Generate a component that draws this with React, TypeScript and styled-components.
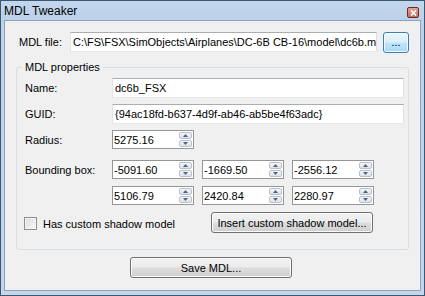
import React, { FC } from 'react';
import styled, { createGlobalStyle, css } from 'styled-components';

const GlobalStyle = createGlobalStyle`
    html, body {
        margin: 0;
        padding: 0;
        background: #ffffff;
    }
    body {
        font-family: "Liberation Sans", Arial, sans-serif;
        font-size: 11px;
        color: #000000;
    }
`;

const Window = styled.div`
    width: 425px;
    height: 296px;
    box-sizing: border-box;
    display: flex;
    flex-direction: column;
    background: linear-gradient(#bdd2ea, #c3d6ec);
    border: 1px solid #3a5874;
    overflow: hidden;
`;

const TitleBar = styled.div`
    height: 19px;
    flex-shrink: 0;
    display: flex;
    align-items: center;
    padding: 0 5px 0 3px;
    background: linear-gradient(#c2d6ec, #bcd1e9);
`;

const Title = styled.span`
    font-family: "Liberation Sans", Arial, sans-serif;
    font-size: 12px;
    color: #000000;
    margin-right: auto;
    padding-top: 1px;
`;

const CloseButton = styled.div`
    width: 12px;
    height: 11px;
    box-sizing: border-box;
    margin-top: 4px;
    border: 1px solid #6c2a24;
    border-radius: 2px;
    background: linear-gradient(#e2a397, #c86b5e);
    display: flex;
    align-items: center;
    justify-content: center;
`;

const Client = styled.div`
    flex: 1;
    margin: 0 3px 4px 3px;
    background: #f0f0f0;
    border: 1px solid #8ca3bb;
    display: flex;
    flex-direction: column;
    padding: 11px 0 0 0;
`;

const FileRow = styled.div`
    display: flex;
    align-items: center;
    padding-left: 14px;
    height: 20px;
`;

const Label = styled.span<{ width?: number }>`
    ${props => props.width && css`width: ${props.width}px;`}
    flex-shrink: 0;
    white-space: nowrap;
`;

const TextBox = styled.div<{ width?: number }>`
    height: 20px;
    box-sizing: border-box;
    ${props => props.width ? css`width: ${props.width}px;` : css`flex: 1;`}
    background: #ffffff;
    border: 1px solid;
    border-color: #abadb3 #dbdfe6 #e3e9ef #e2e3ea;
    padding: 0 2px 0 2px;
    display: flex;
    align-items: center;
    white-space: nowrap;
    overflow: hidden;
`;

const Button = styled.button<{ width: number; focused?: boolean }>`
    width: ${props => props.width}px;
    height: 21px;
    box-sizing: border-box;
    padding: 0;
    font-family: "Liberation Sans", Arial, sans-serif;
    font-size: 11px;
    color: #000000;
    border: 1px solid #707070;
    border-radius: 3px;
    background: linear-gradient(#f2f2f2 0%, #ebebeb 48%, #dddddd 52%, #cfcfcf 100%);
    box-shadow: inset 0 0 0 1px #fbfbfb;
    ${props => props.focused && css`
        border-color: #3c7fb1;
        background: linear-gradient(#eaf6fd 0%, #d9f0fc 48%, #bee6fd 52%, #a7d9f5 100%);
        box-shadow: inset 0 0 0 1px #f5fbfe;
    `}
`;

const GroupBox = styled.fieldset`
    margin: 9px 0 0 11px;
    width: 393px;
    box-sizing: border-box;
    border: 1px solid #d5dfe5;
    border-radius: 3px;
    padding: 4px 4px 16px 8px;
    display: grid;
    grid-template-columns: 87px 1fr;
    grid-template-rows: 20px 6px 20px 6px 19px 11px 19px 7px 19px 7px 21px;
    align-items: center;
`;

const Legend = styled.legend`
    padding: 0 3px;
    margin-left: -3px;
    line-height: 13px;
    font-size: 11px;
`;

const Gap = styled.div`
    grid-column: 1 / -1;
`;

const SpinGroup = styled.div`
    display: flex;
    gap: 8px;
`;

const SpinBox = styled.div`
    width: 82px;
    height: 19px;
    box-sizing: border-box;
    display: flex;
    background: #ffffff;
    border: 1px solid #969696;
`;

const SpinValue = styled.div`
    flex: 1;
    padding-left: 1px;
    display: flex;
    align-items: center;
    white-space: nowrap;
`;

const SpinButtons = styled.div`
    width: 13px;
    margin: 1px 1px 1px 0;
    display: flex;
    flex-direction: column;
    gap: 1px;
`;

const SpinButton = styled.div`
    flex: 1;
    box-sizing: border-box;
    border: 1px solid #b8c0cb;
    border-radius: 2px;
    background: linear-gradient(#f4f5f7, #dde2e9);
    display: flex;
    align-items: center;
    justify-content: center;
`;

const CheckRow = styled.div`
    grid-column: 1 / -1;
    display: flex;
    align-items: center;
    margin-left: -1px;
`;

const CheckLabel = styled.label`
    width: 187px;
    display: flex;
    align-items: center;
    gap: 6px;
    padding-top: 2px;
`;

const CheckBox = styled.span`
    width: 13px;
    height: 13px;
    box-sizing: border-box;
    border: 1px solid #8e8f8f;
    background: linear-gradient(135deg, #dcdcdc, #f8f8f8);
    box-shadow: inset 0 0 0 1px #f4f4f4;
`;

const Footer = styled.div`
    display: flex;
    justify-content: center;
    padding: 7px 3px 0 0;
`;

const Arrow: FC<{ up?: boolean }> = ({ up }) => (
    <svg width="5" height="3" viewBox="0 0 5 3">
        <path d={up ? 'M2.5 0 L5 3 L0 3 Z' : 'M0 0 L5 0 L2.5 3 Z'} fill="#4d6185" />
    </svg>
);

const Spin: FC<{ value: string }> = ({ value }) => (
    <SpinBox>
        <SpinValue>{value}</SpinValue>
        <SpinButtons>
            <SpinButton><Arrow up /></SpinButton>
            <SpinButton><Arrow /></SpinButton>
        </SpinButtons>
    </SpinBox>
);

const bounds = [
    ['-5091.60', '-1669.50', '-2556.12'],
    ['5106.79', '2420.84', '2280.97'],
];

const App: FC = () => {
    return (
        <>
            <GlobalStyle />
            <Window>
                <TitleBar>
                    <Title>MDL Tweaker</Title>
                    <CloseButton>
                        <svg width="7" height="6" viewBox="0 0 7 6">
                            <path d="M1 0.5 L6 5.5 M6 0.5 L1 5.5" stroke="#ffffff" strokeWidth="1.6" />
                        </svg>
                    </CloseButton>
                </TitleBar>
                <Client>
                    <FileRow>
                        <Label width={51}>MDL file:</Label>
                        <TextBox width={307}>C:\FS\FSX\SimObjects\Airplanes\DC-6B CB-16\model\dc6b.mdl</TextBox>
                        <Button width={26} focused style={{ marginLeft: 6 }}>...</Button>
                    </FileRow>
                    <GroupBox>
                        <Legend>MDL properties</Legend>
                        <Label>Name:</Label>
                        <TextBox>dc6b_FSX</TextBox>
                        <Gap />
                        <Label>GUID:</Label>
                        <TextBox>{'{94ac18fd-b637-4d9f-ab46-ab5be4f63adc}'}</TextBox>
                        <Gap />
                        <Label>Radius:</Label>
                        <Spin value="5275.16" />
                        <Gap />
                        <Label>Bounding box:</Label>
                        <SpinGroup>
                            {bounds[0].map(v => <Spin key={v} value={v} />)}
                        </SpinGroup>
                        <Gap />
                        <span />
                        <SpinGroup>
                            {bounds[1].map(v => <Spin key={v} value={v} />)}
                        </SpinGroup>
                        <Gap />
                        <CheckRow>
                            <CheckLabel>
                                <CheckBox />
                                Has custom shadow model
                            </CheckLabel>
                            <Button width={162}>Insert custom shadow model...</Button>
                        </CheckRow>
                    </GroupBox>
                    <Footer>
                        <Button width={162}>Save MDL...</Button>
                    </Footer>
                </Client>
            </Window>
        </>
    );
};

export default App;
